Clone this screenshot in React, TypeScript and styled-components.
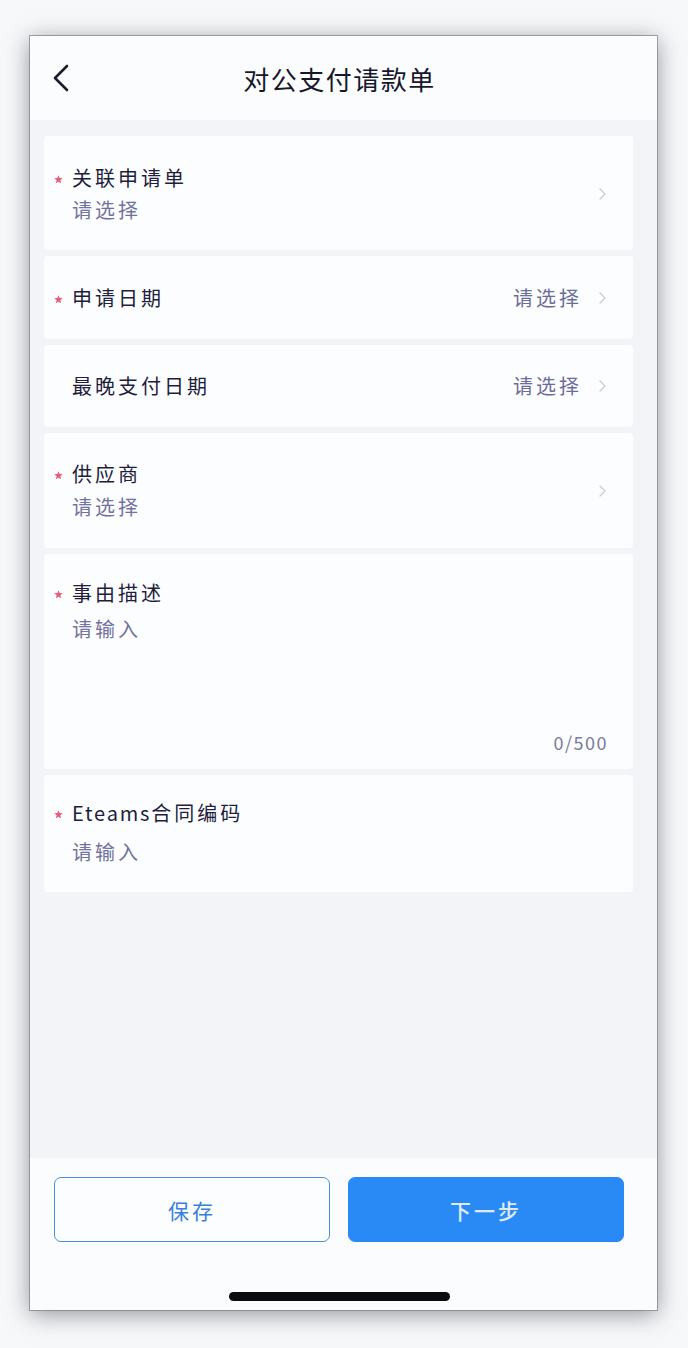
import React from "react";
import styled, { createGlobalStyle } from "styled-components";

const GlobalStyle = createGlobalStyle`
  html, body {
    margin: 0;
    padding: 0;
    background: #f7f8fa;
  }
  body {
    font-family: "Noto Sans CJK SC", "Noto Sans", sans-serif;
    min-height: 1348px;
  }
`;

const Page = styled.div`
  width: 688px;
  height: 1348px;
  padding-top: 36px;
  box-sizing: border-box;
  background: #f7f8fa;
`;

const Phone = styled.div`
  width: 627px;
  height: 1274px;
  margin-left: 30px;
  display: flex;
  flex-direction: column;
  background: #f3f4f8;
  box-shadow: 0 0 0 1px rgba(120, 120, 130, 0.65), 0 4px 22px rgba(60, 60, 70, 0.55);
`;

const Header = styled.div`
  height: 84px;
  flex-shrink: 0;
  display: grid;
  grid-template-columns: 40px 1fr 40px;
  align-items: center;
  padding: 0 30px 0 22px;
  background: #fbfcfe;
`;

const BackButton = styled.div`
  display: flex;
  align-items: center;
  color: #1c1c2c;
`;

const Title = styled.div`
  text-align: center;
  font-size: 26px;
  font-weight: 400;
  letter-spacing: 1.5px;
  color: #17172a;
`;

const Content = styled.div`
  flex: 1;
  display: flex;
  flex-direction: column;
  gap: 6px;
  padding: 16px 24px 0 14px;
`;

const Card = styled.div<{ $pt: number; $pb: number }>`
  display: flex;
  align-items: center;
  padding: ${(p) => p.$pt}px 27px ${(p) => p.$pb}px 10px;
  background: #fcfdff;
  border-radius: 4px;
`;

const Star = styled.span<{ $show: boolean }>`
  width: 18px;
  height: 30px;
  flex-shrink: 0;
  align-self: flex-start;
  display: flex;
  align-items: center;
  padding-top: 3px;
  box-sizing: border-box;
  color: #e45f79;
  visibility: ${(p) => (p.$show ? "visible" : "hidden")};
`;

const Body = styled.div<{ $gap: number }>`
  flex: 1;
  display: flex;
  flex-direction: column;
  gap: ${(p) => p.$gap}px;
`;

const Label = styled.div`
  font-size: 20px;
  line-height: 30px;
  letter-spacing: 3px;
  color: #221d3b;
`;

const Latin = styled.span`
  letter-spacing: 1.8px;
`;

const Placeholder = styled.div`
  font-size: 20px;
  line-height: 30px;
  letter-spacing: 3px;
  color: #72739c;
`;

const TextArea = styled.div`
  height: 110px;
  font-size: 20px;
  line-height: 30px;
  letter-spacing: 3px;
  color: #72739c;
`;

const Counter = styled.div`
  text-align: right;
  font-size: 18px;
  line-height: 24px;
  letter-spacing: 1.5px;
  color: #7a7b9c;
  margin-right: -2px;
`;

const Value = styled.div`
  margin-right: 17px;
  font-size: 20px;
  line-height: 30px;
  letter-spacing: 3px;
  color: #6c6d97;
`;

const Arrow = styled.span`
  display: flex;
  color: #c9cbd7;
`;

const Footer = styled.div`
  height: 152px;
  flex-shrink: 0;
  box-sizing: border-box;
  display: flex;
  flex-direction: column;
  padding: 19px 33px 9px 24px;
  background: #fbfcfe;
`;

const Buttons = styled.div`
  display: grid;
  grid-template-columns: 1fr 1fr;
  gap: 18px;
`;

const Button = styled.div<{ $primary?: boolean }>`
  height: 65px;
  box-sizing: border-box;
  display: flex;
  align-items: center;
  justify-content: center;
  border-radius: 7px;
  font-size: 21px;
  letter-spacing: 3px;
  border: 1.5px solid ${(p) => (p.$primary ? "#2a8af5" : "#4a8fe0")};
  background: ${(p) => (p.$primary ? "#2a8af5" : "#fbfdff")};
  color: ${(p) => (p.$primary ? "#dfeafb" : "#3a7fd8")};
  font-weight: ${(p) => (p.$primary ? 500 : 400)};
`;

const HomeBar = styled.div`
  margin-top: auto;
  align-self: center;
  width: 221px;
  height: 9px;
  border-radius: 5px;
  background: #0c0c10;
`;

function Chevron() {
  return (
    <Arrow>
      <svg width="7" height="12" viewBox="0 0 7 12" fill="none">
        <path d="M1 1l5 5-5 5" stroke="currentColor" strokeWidth="1.2" strokeLinecap="round" strokeLinejoin="round" />
      </svg>
    </Arrow>
  );
}

function Required({ show = true }: { show?: boolean }) {
  return (
    <Star $show={show}>
      <svg width="9" height="9" viewBox="0 0 10 10">
        <path
          d="M5 0.3l1.3 3.1 3.4 0.3-2.6 2.2 0.8 3.3L5 7.4 2.1 9.2l0.8-3.3L0.3 3.7l3.4-0.3z"
          fill="currentColor"
        />
      </svg>
    </Star>
  );
}

export default function App() {
  return (
    <>
      <GlobalStyle />
      <Page>
        <Phone>
          <Header>
            <BackButton>
              <svg width="18" height="28" viewBox="0 0 18 28" fill="none">
                <path d="M15 2L3 14l12 12" stroke="currentColor" strokeWidth="2.6" strokeLinecap="round" strokeLinejoin="round" />
              </svg>
            </BackButton>
            <Title>对公支付请款单</Title>
            <span />
          </Header>

          <Content>
            <Card $pt={27} $pb={25}>
              <Required />
              <Body $gap={2}>
                <Label>关联申请单</Label>
                <Placeholder>请选择</Placeholder>
              </Body>
              <Chevron />
            </Card>

            <Card $pt={27} $pb={26}>
              <Required />
              <Body $gap={0}>
                <Label>申请日期</Label>
              </Body>
              <Value>请选择</Value>
              <Chevron />
            </Card>

            <Card $pt={26} $pb={26}>
              <Required show={false} />
              <Body $gap={0}>
                <Label>最晚支付日期</Label>
              </Body>
              <Value>请选择</Value>
              <Chevron />
            </Card>

            <Card $pt={26} $pb={26}>
              <Required />
              <Body $gap={3}>
                <Label>供应商</Label>
                <Placeholder>请选择</Placeholder>
              </Body>
              <Chevron />
            </Card>

            <Card $pt={24} $pb={15}>
              <Required />
              <Body $gap={6}>
                <Label>事由描述</Label>
                <TextArea>请输入</TextArea>
                <Counter>0/500</Counter>
              </Body>
            </Card>

            <Card $pt={23} $pb={25}>
              <Required />
              <Body $gap={9}>
                <Label>
                  <Latin>Eteams</Latin>合同编码
                </Label>
                <Placeholder>请输入</Placeholder>
              </Body>
            </Card>
          </Content>

          <Footer>
            <Buttons>
              <Button>保存</Button>
              <Button $primary>下一步</Button>
            </Buttons>
            <HomeBar />
          </Footer>
        </Phone>
      </Page>
    </>
  );
}
